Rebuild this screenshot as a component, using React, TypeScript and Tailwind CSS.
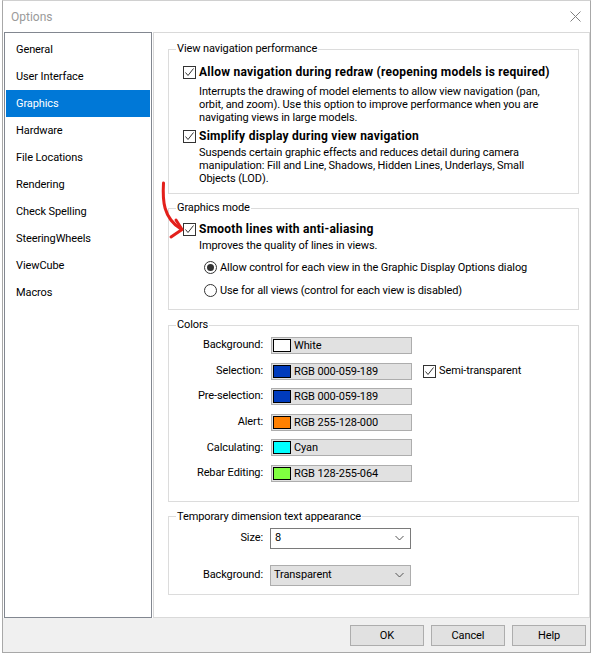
import React from 'react'

const NAV = [
  'General',
  'User Interface',
  'Graphics',
  'Hardware',
  'File Locations',
  'Rendering',
  'Check Spelling',
  'SteeringWheels',
  'ViewCube',
  'Macros',
]

const COLORS = [
  { label: 'Background:', swatch: '#ffffff', text: 'White' },
  { label: 'Selection:', swatch: '#003bbd', text: 'RGB 000-059-189', semi: true },
  { label: 'Pre-selection:', swatch: '#003bbd', text: 'RGB 000-059-189' },
  { label: 'Alert:', swatch: '#ff8000', text: 'RGB 255-128-000' },
  { label: 'Calculating:', swatch: '#00ffff', text: 'Cyan' },
  { label: 'Rebar Editing:', swatch: '#80ff40', text: 'RGB 128-255-064' },
]

function CheckBox() {
  return (
    <span className="flex w-[13px] h-[13px] shrink-0 items-center justify-center border border-[#333333] bg-white">
      <svg width="11" height="11" viewBox="0 0 11 11">
        <path d="M1.5 5.5 L4 8.5 L9.5 1.5" fill="none" stroke="#333333" strokeWidth="1" />
      </svg>
    </span>
  )
}

function Radio({ on }: { on?: boolean }) {
  return (
    <span className="flex w-[13px] h-[13px] shrink-0 items-center justify-center rounded-full border border-[#333333] bg-white">
      {on && <span className="w-[7px] h-[7px] rounded-full bg-[#333333]" />}
    </span>
  )
}

function Chevron() {
  return (
    <svg width="9" height="6" viewBox="0 0 9 6" className="shrink-0">
      <path d="M0.5 1 L4.5 5 L8.5 1" fill="none" stroke="#555555" strokeWidth="1" />
    </svg>
  )
}

function Group({ title, className, children }: { title: string; className?: string; children: React.ReactNode }) {
  return (
    <fieldset className={`border border-[#dcdcdc] ${className ?? ''}`}>
      <legend className="ml-[7px] px-[1px] leading-[14px]">{title}</legend>
      {children}
    </fieldset>
  )
}

function Option({ title, desc, className, descGap }: { title: string; desc: string[]; className?: string; descGap: string }) {
  return (
    <div className={className}>
      <div className="flex items-center gap-[3px] leading-[15px] font-bold text-[12px] tracking-[0.25px]">
        <CheckBox />
        <span className="whitespace-nowrap">{title}</span>
      </div>
      <div className={`pl-[16px] leading-[13px] ${descGap}`}>
        {desc.map(d => <div key={d} className="whitespace-nowrap">{d}</div>)}
      </div>
    </div>
  )
}

export default function App() {
  return (
    <div
      className="relative w-[592px] h-[654px] overflow-hidden bg-white text-[11px] tracking-[-0.1px] text-black"
      style={{ fontFamily: '"Segoe UI", Roboto, "Noto Sans", sans-serif' }}
    >
      <div className="ml-[2px] w-[589px] h-[653px] flex flex-col border border-[#a8a8a8] border-t-[#d0d0d0] bg-white">
        {/* title bar */}
        <div className="h-[31px] flex items-center justify-between pl-[8px] pr-[9px]">
          <span className="text-[12px] tracking-normal text-[#9a9a9a]">Options</span>
          <svg width="11" height="11" viewBox="0 0 11 11">
            <path d="M0.5 0.5 L10.5 10.5 M10.5 0.5 L0.5 10.5" stroke="#808080" strokeWidth="1" />
          </svg>
        </div>

        <div className="h-[586px] flex gap-[1px] ml-[1px]">
          {/* left nav */}
          <div className="w-[148px] border border-[#828790] pt-[3px]">
            {NAV.map(n => (
              <div
                key={n}
                className={`mx-[1px] h-[27px] flex items-center pl-[10px] pt-[2px] ${n === 'Graphics' ? 'bg-[#0078d7] text-white' : 'text-[#000000]'}`}
              >
                {n}
              </div>
            ))}
          </div>

          {/* right panel */}
          <div className="flex-1 border border-[#d9d9d9] pl-[14px] pr-[10px] pt-[9px]">
            <Group title="View navigation performance">
              <div className="pl-[14px] pt-[9px] pb-[8px]">
                <Option
                  title="Allow navigation during redraw (reopening models is required)"
                  desc={[
                    'Interrupts the drawing of model elements to allow view navigation (pan,',
                    'orbit, and zoom). Use this option to improve performance when you are',
                    'navigating views in large models.',
                  ]}
                  descGap="mt-[5px]"
                />
                <Option
                  title="Simplify display during view navigation"
                  desc={[
                    'Suspends certain graphic effects and reduces detail during camera',
                    'manipulation: Fill and Line, Shadows, Hidden Lines, Underlays, Small',
                    'Objects (LOD).',
                  ]}
                  className="mt-[5px]"
                  descGap="mt-[2px]"
                />
              </div>
            </Group>

            <Group title="Graphics mode" className="mt-[7px]">
              <div className="pl-[14px] pt-[7px] pb-[11px]">
                <div className="flex items-center gap-[3px] leading-[15px] font-bold text-[12px] tracking-[0.25px]">
                  <CheckBox />
                  <span>Smooth lines with anti-aliasing</span>
                </div>
                <div className="pl-[16px] mt-[2px] leading-[13px]">Improves the quality of lines in views.</div>
                <div className="pl-[21px] mt-[8px] flex items-center gap-[3px] leading-[15px]">
                  <Radio on />
                  <span>Allow control for each view in the Graphic Display Options dialog</span>
                </div>
                <div className="pl-[21px] mt-[8px] flex items-center gap-[3px] leading-[15px]">
                  <Radio />
                  <span>Use for all views (control for each view is disabled)</span>
                </div>
              </div>
            </Group>

            <Group title="Colors" className="mt-[8px]">
              <div className="flex flex-col gap-[8.6px] pt-[5px] pb-[19px]">
                {COLORS.map(c => (
                  <div key={c.label} className="flex items-center h-[17px]">
                    <span className="w-[94px] text-right">{c.label}</span>
                    <div className="ml-[8px] w-[141px] h-[17px] flex items-center gap-[3px] pl-[1px] border border-[#adadad] bg-[#e1e1e1]">
                      <span className="w-[18px] h-[13px] border border-black" style={{ backgroundColor: c.swatch }} />
                      <span className="leading-[15px]">{c.text}</span>
                    </div>
                    {c.semi && (
                      <div className="ml-[11px] flex items-center gap-[3px]">
                        <CheckBox />
                        <span>Semi-transparent</span>
                      </div>
                    )}
                  </div>
                ))}
              </div>
            </Group>

            <Group title="Temporary dimension text appearance" className="mt-[8px]">
              <div className="pt-[4px] pb-[8px]">
                <div className="flex items-center">
                  <span className="w-[94px] text-right">Size:</span>
                  <div className="ml-[7px] w-[141px] h-[21px] flex items-center justify-between pl-[4px] pr-[6px] border border-[#7a7a7a] bg-white">
                    <span>8</span>
                    <Chevron />
                  </div>
                </div>
                <div className="flex items-center mt-[16px]">
                  <span className="w-[94px] text-right">Background:</span>
                  <div className="ml-[7px] w-[141px] h-[21px] flex items-center justify-between pl-[3px] pr-[6px] border border-[#adadad] bg-[#e1e1e1]">
                    <span>Transparent</span>
                    <Chevron />
                  </div>
                </div>
              </div>
            </Group>
          </div>
        </div>

        {/* button bar */}
        <div className="h-[34px] bg-[#f0f0f0] flex justify-end gap-[7px] pt-[7px] pr-[4px]">
          {['OK', 'Cancel', 'Help'].map(b => (
            <button key={b} className="w-[74px] h-[21px] border border-[#adadad] bg-[#e1e1e1] leading-[19px]">
              {b}
            </button>
          ))}
        </div>
      </div>

      {/* red annotation arrow */}
      <svg className="absolute inset-0 pointer-events-none" width="592" height="654" viewBox="0 0 592 654">
        <path d="M163.5 183 C162.5 200 163 218 181 229" fill="none" stroke="#e3201b" strokeWidth="3" strokeLinecap="round" />
        <path d="M171 237 L182 229.5 L176 220" fill="none" stroke="#e3201b" strokeWidth="3" strokeLinecap="round" strokeLinejoin="round" />
      </svg>
    </div>
  )
}
